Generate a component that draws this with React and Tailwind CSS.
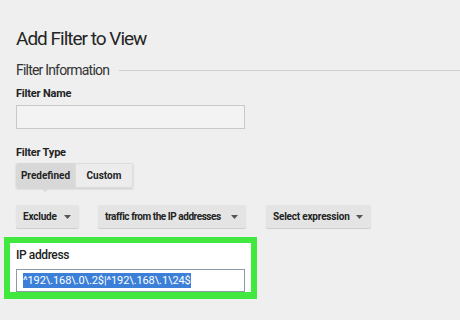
import React from "react";

function Caret() {
  return (
    <svg width="7" height="4" viewBox="0 0 7 4" className="shrink-0">
      <path d="M0 0h7L3.5 4z" fill="#555" />
    </svg>
  );
}

function Drop({ label, w, track }) {
  return (
    <div
      className={`flex h-[23px] items-center justify-between whitespace-nowrap rounded-[2px] bg-[#e4e4e4] pl-[7px] pr-[8px] text-[10px] font-bold text-[#222] shadow-[0_1px_1px_rgba(0,0,0,0.15)] ${w} ${track}`}
    >
      <span>{label}</span>
      <Caret />
    </div>
  );
}

export default function App() {
  return (
    <div
      className="h-[320px] w-[460px] overflow-hidden bg-[#efefef] pl-4 text-[#222]"
      style={{ fontFamily: "Roboto, 'Liberation Sans', sans-serif" }}
    >
      <div className="pt-[27px] text-[19px] leading-[24px] tracking-[-1px] text-[#252525]">Add Filter to View</div>
      <div className="mt-[10px] flex items-center text-[14px] leading-[18px] tracking-[-0.8px] text-[#333]">
        <span>Filter Information</span>
        <div className="ml-[10px] h-px flex-1 bg-[#cfcfcf]" />
      </div>
      <div className="mt-[8px] text-[11px] font-bold leading-[14px] tracking-[-0.2px]">Filter Name</div>
      <div className="mt-[4px] h-[24px] w-[229px] border border-[#c9c9c9] bg-[#f3f3f3]" />
      <div className="mt-[17px] text-[11px] font-bold leading-[14px] tracking-[-0.2px]">Filter Type</div>
      <div className="mt-[3px] flex h-[25px] w-[117px] text-[10px] font-bold shadow-[0_1px_2px_rgba(0,0,0,0.15)]">
        <div className="relative flex w-[59px] items-center justify-center rounded-l-[2px] bg-[#d8d8d8]">
          Predefined
          <div className="absolute -bottom-[4px] left-[25px] h-0 w-0 border-x-[4px] border-t-[4px] border-x-transparent border-t-[#d8d8d8]" />
        </div>
        <div className="flex w-[58px] items-center justify-center rounded-r-[2px] border border-[#dcdcdc] bg-[#ececec]">
          Custom
        </div>
      </div>
      <div className="mt-[17px] flex items-center">
        <Drop label="Exclude" w="w-[63px]" track="tracking-[-0.2px]" />
        <div className="ml-[19px]">
          <Drop label="traffic from the IP addresses" w="w-[148px]" track="tracking-[-0.45px]" />
        </div>
        <div className="ml-[20px]">
          <Drop label="Select expression" w="w-[105px]" track="tracking-[-0.2px]" />
        </div>
      </div>
      <div className="-ml-3 mt-[9px] h-[62px] w-[253px] border-[6px] border-b-[7px] border-[#40e840] bg-white pl-[6px] pt-[5px]">
        <div className="text-[12px] font-medium leading-[15px] tracking-[-0.4px] text-[#222]">IP address</div>
        <div className="mt-[6px] flex h-[23px] w-[229px] items-center border border-[#8a9aa8] bg-white pl-[6px]">
          <span className="bg-[#3b7fd8] text-[11px] leading-[15px] tracking-[-0.1px] text-white">
            ^192\.168\.0\.2$|^192\.168\.1\24$
          </span>
        </div>
      </div>
    </div>
  );
}
